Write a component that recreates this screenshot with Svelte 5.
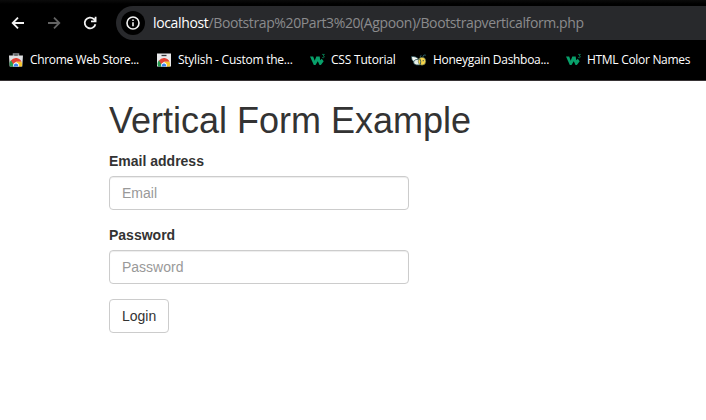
<script>
  const bookmarks = [
    { icon: 'store', title: 'Chrome Web Store...', width: 128, spacing: -0.35 },
    { icon: 'card', title: 'Stylish - Custom the...', width: 133, spacing: -0.25 },
    { icon: 'w3', title: 'CSS Tutorial', width: 82, spacing: -0.2 },
    { icon: 'bee', title: 'Honeygain Dashboa...', width: 134, spacing: -0.3 },
    { icon: 'w3', title: 'HTML Color Names', width: 120, spacing: -0.3 }
  ];
</script>

<div class="page">
  <header>
    <nav class="toolbar">
      <svg class="back" width="14" height="14" viewBox="0 0 14 14"><path d="M13 7H2M7 1.7 1.7 7 7 12.3" /></svg>
      <svg class="forward" width="14" height="14" viewBox="0 0 14 14"><path d="M1 7h11M7 1.7 12.3 7 7 12.3" /></svg>
      <svg class="reload" width="14" height="14" viewBox="0 0 14 14"><path d="M12.4 8.2A5.4 5.4 0 1 1 10.8 3L12.2 4.5M12.6.8v4.5H8" /></svg>
      <div class="address">
        <span class="info">
          <svg width="14" height="14" viewBox="0 0 14 14"><circle cx="7" cy="7" r="6" /><path d="M7 6.2v4M7 3.4v1.5" /></svg>
        </span>
        <span class="url"><b>localhost</b>/Bootstrap%20Part3%20(Agpoon)/Bootstrapverticalform.php</span>
      </div>
    </nav>
    <div class="bookmarks">
      {#each bookmarks as { icon, title, width, spacing }}
        <a class="bookmark" href="#top" style="width: {width}px">
          <svg class="favicon" width="16" height="16" viewBox="0 0 16 16">
            {#if icon === 'store' || icon === 'card'}
              {#if icon === 'store'}
                <path d="M5.5 4V2h5v2" fill="none" stroke="#8c8f92" stroke-width="1.5" />
                <path d="M1 3.5h14l-.7 11H1.7z" fill="#dedfe1" />
              {:else}
                <path d="M1 1.5h14v13H1z" fill="#e9e9eb" />
                <path d="M5.5 3.5h5" stroke="#33363a" stroke-width="1.3" />
              {/if}
              <path d="M2.2 14.5a5.9 5.9 0 0 1 1-6.6l4.8 6.6z" fill="#259b50" />
              <path d="M3 8.6a6 6 0 0 1 10.5 1.2H8l-2.4 3z" fill="#e34134" />
              <path d="M8.5 9.8h5a6 6 0 0 1 .2 4.7H8z" fill="#f9c52a" />
              <path d="M5 14.5a3.1 3.1 0 1 1 6 0z" fill="#fff" />
              <path d="M5.8 14.5a2.3 2.3 0 1 1 4.4 0z" fill="#3c82ee" />
            {:else if icon === 'w3'}
              <path d="M1 4.4h3.2l1.5 4.4 1.6-4.4h3.4l.5 3.9 1.6-1.6 1.9 2.6-2.8 3.6h-1.4L8.8 9.3l-2.3 3.6H4.8z" fill="#08a06a" />
              <path d="M13.1 2.4h2.3l-1.2 1.5q1.5.1 1 1.3-.7 1-2 .3" fill="none" stroke="#087e53" stroke-width=".9" />
            {:else}
              <path d="M9 5 10.2 3.2M11.7 5l1.2-2 2 .2" fill="none" stroke="#285b65" />
              <path d="M.3 4.7q5-.8 7.7 3L6.7 10H3Q.5 8.2.3 4.7z" fill="#f5faf4" stroke="#264d55" stroke-width=".8" />
              <ellipse cx="7" cy="10.2" rx="4.3" ry="2.8" fill="#e5eee8" stroke="#264d55" stroke-width=".8" />
              <ellipse cx="11" cy="9.2" rx="3.8" ry="4" fill="#f7d449" stroke="#264d55" stroke-width=".5" />
              <path d="M8.8 6.7q1.6 3 .6 5.8" fill="none" stroke="#264d55" stroke-width=".9" />
              <circle cx="12.2" cy="8.7" r=".6" fill="#264d55" />
            {/if}
          </svg>
          <span class="title" style="letter-spacing: {spacing}px">{title}</span>
        </a>
      {/each}
    </div>
  </header>

  <main>
    <h1>Vertical Form Example</h1>
    <form>
      <div class="form-group">
        <label for="email">Email address</label>
        <input id="email" type="email" placeholder="Email" />
      </div>
      <div class="form-group">
        <label for="password">Password</label>
        <input id="password" type="password" placeholder="Password" />
      </div>
      <button type="button">Login</button>
    </form>
  </main>
</div>

<style>
  * { box-sizing: border-box; }
  .page {
    height: 420px;
    overflow: hidden;
    background: #fff;
    color: #333;
    font: 14px/20px "Liberation Sans", Arial, sans-serif;
  }
  header {
    height: 81px;
    padding-top: 6px;
    overflow: hidden;
    background: linear-gradient(#0b0b0b, #000 4px);
    border-bottom: 1px solid #373335;
    font-family: "Open Sans", "Noto Sans", sans-serif;
  }
  .toolbar { display: flex; align-items: center; height: 34px; padding-left: 11px; }
  .toolbar svg { flex: none; fill: none; stroke: #f2f2f2; stroke-width: 1.8; }
  .toolbar .forward { margin-left: 22px; stroke: #636363; }
  .toolbar .reload { margin-left: 22px; }
  .address {
    display: flex;
    align-items: center;
    flex: 1;
    height: 34px;
    margin-left: 19px;
    padding-left: 5px;
    border-radius: 17px 0 0 17px;
    background: #28292c;
  }
  .info {
    display: grid;
    place-items: center;
    width: 24px;
    height: 24px;
    border-radius: 50%;
    background: #000;
  }
  .info svg { stroke-width: 1.6; }
  .url { margin-left: 8px; color: #8b8b8d; font-size: 14px; letter-spacing: -0.39px; white-space: nowrap; }
  .url b { color: #fff; font-weight: 400; letter-spacing: -0.35px; }
  .bookmarks { display: flex; align-items: center; height: 40px; padding-left: 8px; gap: 20px; }
  .bookmark { display: flex; align-items: center; flex: none; gap: 6px; color: #fff; text-decoration: none; }
  .favicon { flex: none; }
  .title { font-size: 12px; white-space: nowrap; }
  main { padding: 20px 0 0 109px; }
  h1 { margin: 0 0 10px; font-size: 36px; font-weight: 400; line-height: 40px; }
  form { width: 300px; }
  .form-group { margin-bottom: 15px; }
  label { display: block; margin-bottom: 5px; font-weight: 700; }
  input {
    display: block;
    width: 300px;
    height: 34px;
    padding: 6px 12px;
    border: 1px solid #ccc;
    border-radius: 4px;
    background: #fff;
    box-shadow: inset 0 1px 1px rgba(0, 0, 0, 0.075);
    font: inherit;
  }
  input::placeholder { color: #999; opacity: 1; }
  button {
    display: block;
    height: 34px;
    padding: 6px 12px;
    border: 1px solid #ccc;
    border-radius: 4px;
    background: #fff;
    color: #333;
    font: inherit;
  }
</style>
